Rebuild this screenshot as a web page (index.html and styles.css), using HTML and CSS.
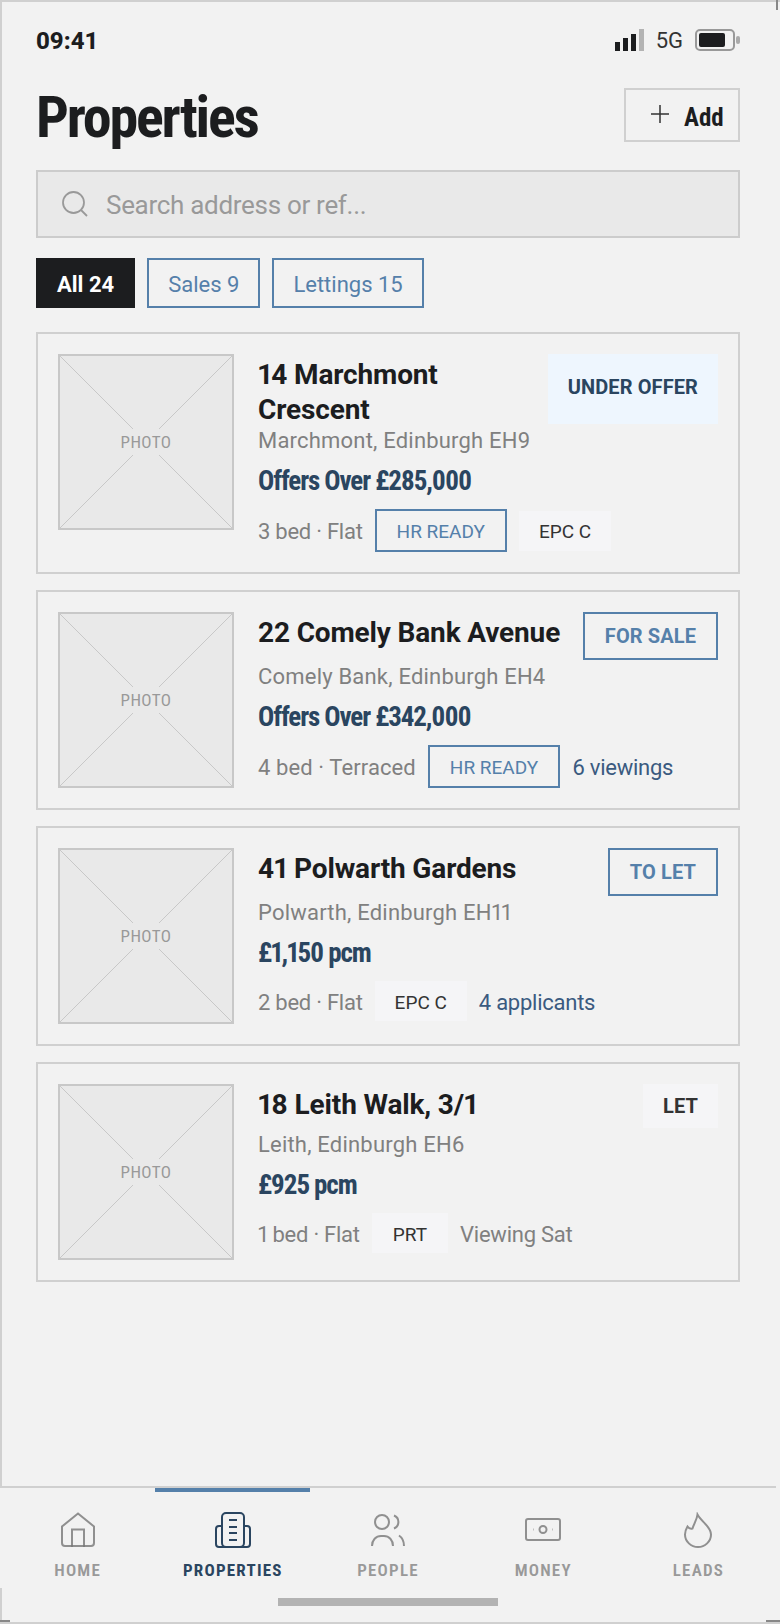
FILE: index.html
```html
<!DOCTYPE html>
<html lang="en">
<head>
    <meta charset="utf-8">
    <title>Properties</title>
    <link rel="stylesheet" href="styles.css">
</head>
<body>
    <div class="frame">
        <span class="mark mark-top"></span>
        <span class="mark mark-left"></span>
        <span class="mark mark-right"></span>

        <div class="page">
            <div class="status">
                <span class="time">09:41</span>
                <div class="status-right">
                    <span class="signal">
                        <i class="bar1"></i><i class="bar2"></i><i class="bar3"></i><i class="bar4"></i>
                    </span>
                    <span class="net">5G</span>
                    <span class="battery"><i></i></span>
                    <span class="battery-nub"></span>
                </div>
            </div>

            <div class="header">
                <h1>Properties</h1>
                <div class="add-btn">
                    <svg width="18" height="18" viewBox="0 0 18 18"><path d="M9 0v18M0 9h18" fill="none" stroke="#333" stroke-width="1.5"/></svg>
                    <span>Add</span>
                </div>
            </div>

            <div class="search">
                <svg width="26" height="26" viewBox="0 0 26 26" fill="none" stroke="#999" stroke-width="1.8"><circle cx="11.5" cy="11.5" r="10.5"/><path d="M19 19l6 6"/></svg>
                <span>Search address or ref...</span>
            </div>

            <div class="filters">
                <span class="chip chip-on">All 24</span>
                <span class="chip">Sales 9</span>
                <span class="chip">Lettings 15</span>
            </div>

            <div class="list">
                <div class="card">
                    <div class="thumb">
                        <svg class="cross" viewBox="0 0 172 172"><path d="M0 0L172 172M172 0L0 172"/></svg>
                        <span>PHOTO</span>
                    </div>
                    <div class="info">
                        <div class="top">
                            <h2>14 Marchmont Crescent</h2>
                            <span class="badge badge-offer">UNDER OFFER</span>
                        </div>
                        <p class="addr">Marchmont, Edinburgh EH9</p>
                        <p class="price">Offers Over £285,000</p>
                        <div class="meta">
                            <span class="beds-flat">3 bed · Flat</span>
                            <span class="tag tag-line">HR READY</span>
                            <span class="tag">EPC C</span>
                        </div>
                    </div>
                </div>

                <div class="card">
                    <div class="thumb">
                        <svg class="cross" viewBox="0 0 172 172"><path d="M0 0L172 172M172 0L0 172"/></svg>
                        <span>PHOTO</span>
                    </div>
                    <div class="info">
                        <div class="top">
                            <h2>22 Comely Bank Avenue</h2>
                            <span class="badge badge-line">FOR SALE</span>
                        </div>
                        <p class="addr">Comely Bank, Edinburgh EH4</p>
                        <p class="price">Offers Over £342,000</p>
                        <div class="meta">
                            <span class="beds-long">4 bed · Terraced</span>
                            <span class="tag tag-line">HR READY</span>
                            <span class="note note-blue">6 viewings</span>
                        </div>
                    </div>
                </div>

                <div class="card">
                    <div class="thumb">
                        <svg class="cross" viewBox="0 0 172 172"><path d="M0 0L172 172M172 0L0 172"/></svg>
                        <span>PHOTO</span>
                    </div>
                    <div class="info">
                        <div class="top">
                            <h2>41 Polwarth Gardens</h2>
                            <span class="badge badge-line">TO LET</span>
                        </div>
                        <p class="addr">Polwarth, Edinburgh EH11</p>
                        <p class="price">£1,150 pcm</p>
                        <div class="meta">
                            <span class="beds-flat">2 bed · Flat</span>
                            <span class="tag">EPC C</span>
                            <span class="note note-blue">4 applicants</span>
                        </div>
                    </div>
                </div>

                <div class="card">
                    <div class="thumb">
                        <svg class="cross" viewBox="0 0 172 172"><path d="M0 0L172 172M172 0L0 172"/></svg>
                        <span>PHOTO</span>
                    </div>
                    <div class="info">
                        <div class="top">
                            <h2>18 Leith Walk, 3/1</h2>
                            <span class="badge badge-plain">LET</span>
                        </div>
                        <p class="addr">Leith, Edinburgh EH6</p>
                        <p class="price">£925 pcm</p>
                        <div class="meta">
                            <span class="beds-flat">1 bed · Flat</span>
                            <span class="tag tag-short">PRT</span>
                            <span class="note">Viewing Sat</span>
                        </div>
                    </div>
                </div>
            </div>
        </div>

        <div class="nav">
            <div class="nav-item">
                <svg viewBox="0 0 36 36"><path d="M18 1.5L34 14.5V31a3 3 0 0 1-3 3H5a3 3 0 0 1-3-3V14.5Z"/><path d="M12 35V17.500h12V35"/></svg>
                <span>HOME</span>
            </div>
            <div class="nav-item nav-on">
                <svg viewBox="0 0 36 36"><rect x="7" y="1" width="22" height="34" rx="4"/><path d="M7 14H4a3 3 0 0 0-3 3v15a3 3 0 0 0 3 3h28a3 3 0 0 0 3-3V17a3 3 0 0 0-3-3h-3"/><path d="M14 8h8M14 15h8M14 21h8M14 28h8"/></svg>
                <span>PROPERTIES</span>
            </div>
            <div class="nav-item">
                <svg viewBox="0 0 36 36"><circle cx="12" cy="10" r="7"/><path d="M2 34c0-6 4-10 9-10h3c5 0 9 4 9 10"/><path d="M24 3.500a7 7 0 0 1 0 13"/><path d="M29 23.500c3 2 5 6 5 10.500"/></svg>
                <span>PEOPLE</span>
            </div>
            <div class="nav-item">
                <svg viewBox="0 0 36 36"><rect x="1" y="7" width="34" height="21" rx="2"/><circle cx="18" cy="17.500" r="3.500"/><path d="M8.500 17.500h.5M27.500 17.500h.5"/></svg>
                <span>MONEY</span>
            </div>
            <div class="nav-item">
                <svg viewBox="0 0 36 36"><path d="M17.500 2.500c-.5 5-3.500 9-5 14-2 .5-4-.5-5-2-1.500 2.500-2.500 5-2.500 8 0 7 6 12.500 13 12.500s13-5.500 13-12.500c0-8-9-12-13.500-20z"/></svg>
                <span>LEADS</span>
            </div>
        </div>

        <div class="home-bar"></div>
    </div>
</body>
</html>
```

FILE: styles.css
```css
* {
    box-sizing: border-box;
}

html, body {
    margin: 0;
    padding: 0;
}

body {
    font-family: Roboto, "Liberation Sans", sans-serif;
    font-variant-numeric: proportional-nums;
    color: #1c1d1f;
    background-color: #f2f2f2;
}

h1, h2, p {
    margin: 0;
}

.frame {
    position: relative;
    display: flex;
    flex-direction: column;
    width: 780px;
    height: 1624px;
    border-top: 2px solid #d0d0d0;
    border-left: 2px solid #d0d0d0;
    border-bottom: 2px solid #d0d0d0;
    background-color: #f2f2f2;
}

.page {
    flex: 1;
    padding: 0 40px 0 34px;
}

/* little corner ticks */
.mark {
    position: absolute;
    background-color: #888;
}

.mark-top {
    top: -2px;
    right: 2px;
    width: 2px;
    height: 10px;
}

.mark-left {
    bottom: 0;
    left: -2px;
    width: 10px;
    height: 2px;
}

.mark-right {
    bottom: 0;
    right: 0;
    width: 14px;
    height: 2px;
}

.status {
    display: flex;
    justify-content: space-between;
    align-items: center;
    height: 28px;
    margin-top: 24px;
}

.time {
    padding-top: 2px;
    font-size: 24px;
    font-weight: 800;
    font-variant-numeric: tabular-nums;
}

.status-right {
    display: flex;
    align-items: center;
}

.signal {
    display: flex;
    align-items: flex-end;
    gap: 3px;
    height: 22px;
}

.signal i {
    display: block;
    width: 5px;
    background-color: #1c1d1f;
}

.signal .bar1 { height: 9px; }
.signal .bar2 { height: 13px; }
.signal .bar3 { height: 17px; }
.signal .bar4 { height: 22px; background-color: #b3b3b3; }

.net {
    margin-left: 12px;
    font-size: 22px;
    color: #333;
}

.battery {
    display: block;
    width: 40px;
    height: 22px;
    margin-left: 12px;
    padding: 2px;
    border: 2px solid #999;
    border-radius: 5px;
}

.battery i {
    display: block;
    width: 26px;
    height: 14px;
    border-radius: 2px;
    background-color: #1c1d1f;
}

.battery-nub {
    display: block;
    width: 4px;
    height: 8px;
    margin-left: 1px;
    border-radius: 2px;
    background-color: #aaa;
}

.header {
    display: flex;
    justify-content: space-between;
    align-items: center;
    height: 54px;
    margin-top: 34px;
}

h1 {
    padding-top: 4px;
    font-size: 58px;
    font-stretch: 75%;
    font-weight: 700;
    line-height: 54px;
    letter-spacing: -2.2px;
}

.add-btn {
    display: flex;
    align-items: center;
    width: 116px;
    height: 54px;
    padding-left: 25px;
    border: 2px solid #d0d0d0;
}

.add-btn svg {
    margin-top: -3px;
}

.add-btn span {
    margin-left: 15px;
    padding-top: 4px;
    font-size: 25px;
    font-stretch: 75%;
    font-weight: 700;
}

.search {
    display: flex;
    align-items: center;
    height: 68px;
    margin-top: 28px;
    padding-left: 24px;
    border: 2px solid #ccc;
    font-size: 26px;
    letter-spacing: -0.3px;
    color: #999;
    background-color: #e9e9e9;
}

.search span {
    margin-left: 18px;
    padding-top: 2px;
}

.filters {
    display: flex;
    gap: 12px;
    margin-top: 20px;
}

.chip {
    display: flex;
    align-items: center;
    height: 50px;
    padding: 3px 19px 0;
    border: 2px solid #5580aa;
    font-size: 22px;
    font-variant-numeric: tabular-nums;
    color: #5580aa;
}

.chip-on {
    border-color: #1c1d1f;
    font-weight: 700;
    color: #fff;
    background-color: #1c1d1f;
}

.list {
    display: flex;
    flex-direction: column;
    gap: 16px;
    margin-top: 24px;
}

.card {
    display: flex;
    padding: 20px;
    border: 2px solid #d0d0d0;
}

.thumb {
    position: relative;
    display: flex;
    flex: none;
    align-items: center;
    justify-content: center;
    width: 176px;
    height: 176px;
    border: 2px solid #c8c8c8;
    background-color: #e9e9e9;
}

.thumb .cross {
    position: absolute;
    top: 0;
    left: 0;
    width: 172px;
    height: 172px;
    fill: none;
    stroke: #c8c8c8;
    stroke-width: 1;
}

.thumb span {
    position: relative;
    padding: 1px 5px 0;
    font-size: 17px;
    font-stretch: 75%;
    line-height: 25px;
    letter-spacing: 0.4px;
    color: #999;
    background-color: #e9e9e9;
}

.info {
    flex: 1;
    min-width: 0;
    margin-left: 24px;
}

.top {
    display: flex;
    justify-content: space-between;
    gap: 16px;
}

h2 {
    margin: 3px 0 -3px;
    font-size: 28px;
    font-weight: 700;
    line-height: 35px;
    letter-spacing: -0.15px;
}

.badge {
    display: flex;
    flex: none;
    align-items: center;
    padding: 0 20px;
    min-height: 44px;
    font-size: 20px;
    font-weight: 700;
    letter-spacing: 0.1px;
}

.badge-offer {
    padding-bottom: 4px;
    color: #2a4560;
    background-color: #eef6fe;
}

.badge-line {
    min-height: 48px;
    border: 2px solid #5580aa;
    color: #5580aa;
}

.badge-plain {
    color: #333;
    background-color: #f5f5f7;
}

.addr {
    margin-top: 4px;
    font-size: 22px;
    line-height: 26px;
    letter-spacing: 0.2px;
    color: #808080;
}

.price {
    margin-top: 10px;
    font-size: 27px;
    font-stretch: 75%;
    font-weight: 700;
    line-height: 34px;
    letter-spacing: -1.1px;
    color: #2a4560;
}

.meta {
    display: flex;
    align-items: center;
    gap: 12px;
    margin-top: 11px;
    font-size: 22px;
    color: #808080;
}

.meta span {
    padding-top: 2px;
}

.beds-flat {
    letter-spacing: -0.25px;
}

.beds-long {
    letter-spacing: 0.1px;
}

.tag {
    display: flex;
    align-items: center;
    height: 40px;
    padding: 0 20px;
    font-size: 19px;
    color: #333;
    background-color: #f5f5f7;
}

.tag-short {
    padding: 0 21px;
}

.tag-line {
    height: 43px;
    border: 2px solid #5580aa;
    color: #5580aa;
    background-color: transparent;
}

.note {
    letter-spacing: -0.25px;
}

.note-blue {
    color: #3a5a80;
}

.nav {
    display: flex;
    flex: none;
    width: 776px;
    height: 102px;
    margin-left: -2px;
    border-top: 2px solid #d0d0d0;
    background-color: #f2f2f2;
}

.nav-item {
    position: relative;
    display: flex;
    flex: 1;
    flex-direction: column;
    align-items: center;
    padding-top: 24px;
}

.nav-item svg {
    width: 36px;
    height: 36px;
    fill: none;
    stroke: #777;
    stroke-opacity: 0.8;
    stroke-width: 2;
}

.nav-item span {
    margin-top: 12px;
    font-size: 17px;
    font-stretch: 75%;
    font-weight: 600;
    letter-spacing: 1.2px;
    color: #999;
}

.nav-on svg {
    stroke: #2a4560;
    stroke-opacity: 1;
}

.nav-on span {
    font-weight: 700;
    color: #2a4560;
}

.nav-on::before {
    content: "";
    position: absolute;
    top: 0;
    left: 0;
    right: 0;
    height: 4px;
    background-color: #5580aa;
}

.home-bar {
    flex: none;
    width: 220px;
    height: 8px;
    margin: 10px 0 16px 276px;
    background-color: #b3b3b3;
}
```
